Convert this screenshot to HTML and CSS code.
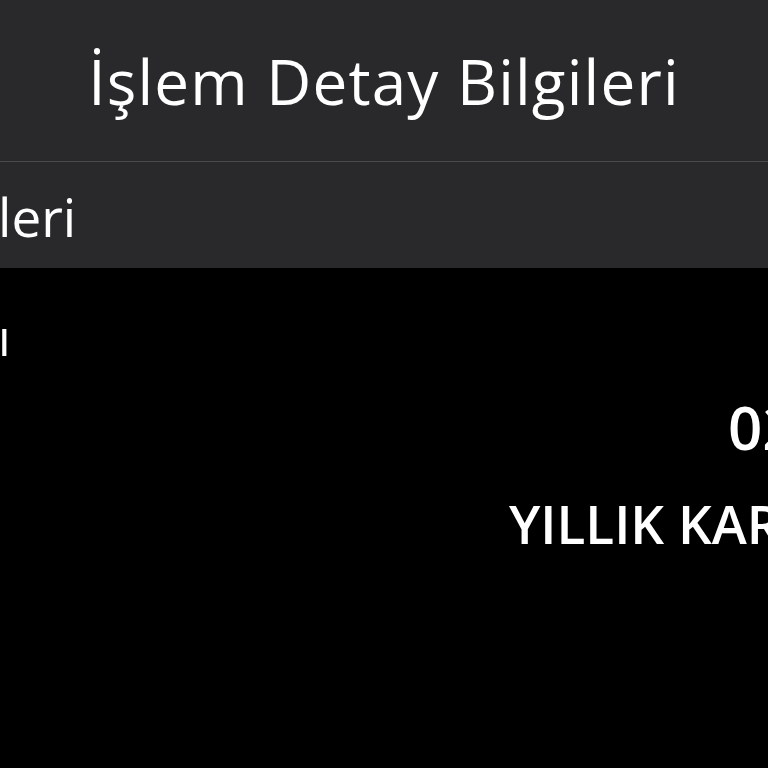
FILE: index.html
```html
<!DOCTYPE html>
<html lang="tr">
<head>
<meta charset="utf-8">
<title>İşlem Detay Bilgileri</title>
<link rel="stylesheet" href="styles.css">
</head>
<body>
<div class="screen">
  <header class="topbar">
    <h1 class="title">İşlem Detay Bilgileri</h1>
  </header>
  <div class="divider"></div>
  <div class="subbar">
    <span class="subtitle">leri</span>
  </div>
  <main class="details">
    <div class="row row-label">
      <span class="label">ı</span>
    </div>
    <div class="row row-date">
      <span class="value value-date">02.01.2024</span>
    </div>
    <div class="row row-type">
      <span class="value value-type">YILLIK KART</span>
    </div>
  </main>
</div>
</body>
</html>
```

FILE: styles.css
```css
html, body {
  margin: 0;
  padding: 0;
  background: #000;
  overflow: hidden;
}

.screen {
  width: 768px;
  height: 768px;
  overflow: hidden;
  font-family: "Open Sans", "Noto Sans", sans-serif;
  color: #fff;
  background: #000;
}

.topbar {
  height: 161px;
  background: #29292b;
  display: flex;
  align-items: center;
  justify-content: center;
}

.title {
  margin: 0;
  font-size: 62px;
  font-weight: 400;
  letter-spacing: 1.2px;
  line-height: 1;
  white-space: nowrap;
  padding-top: 0;
}

.divider {
  height: 1px;
  background: #4b4b4d;
}

.subbar {
  height: 106px;
  background: #29292b;
  display: flex;
  align-items: center;
  white-space: nowrap;
}

.subtitle {
  font-size: 53px;
  line-height: 1;
  margin-left: -2px;
  padding-top: 2px;
}

.details {
  display: flex;
  flex-direction: column;
}

.row {
  white-space: nowrap;
  display: flex;
}

.row-label {
  margin-top: 39px;
  height: 60px;
}

.label {
  font-size: 50px;
  line-height: 60px;
  margin-left: -2px;
}

.row-date {
  margin-top: 25px;
  height: 70px;
}

.value {
  font-weight: 600;
  line-height: 70px;
}

.value-date {
  font-size: 60px;
  padding-left: 728px;
}

.row-type {
  margin-top: 27px;
  height: 70px;
}

.value-type {
  font-size: 53px;
  padding-left: 509px;
}
```
